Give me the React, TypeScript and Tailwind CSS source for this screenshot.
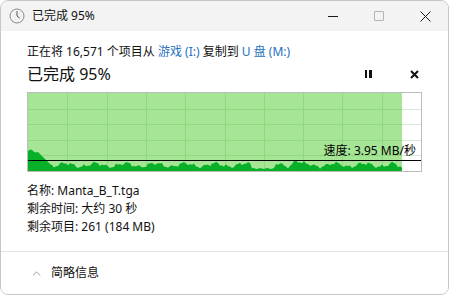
import { ChevronUp } from 'lucide-react';

const FONT = "font-['Noto_Sans','Noto_Sans_CJK_SC',sans-serif]";

// graph inner size (inside the 1px border)
const GW = 393;
const GH = 78;
const FILL_W = 374;
const SPEED_Y = 67;

function sampleHeight(x: number) {
  if (x < 9) return 20 + 1.5 * Math.sin(x * 0.6);
  if (x < 24) return 20 - (x - 9);
  let h =
    6 +
    1.8 * Math.sin(x * 0.21) +
    1.3 * Math.sin(x * 0.57 + 1.3) +
    0.8 * Math.sin(x * 1.37 + 0.4);
  if (x > 222 && x < 248) h = 2.5 + 0.6 * Math.sin(x * 0.9);
  h += 5 * Math.exp(-(((x - 268) / 4) ** 2));
  if (x > 366) h -= (x - 366) * 0.4;
  return Math.max(1.5, h);
}

const dataPath = (() => {
  let d = `M0 ${GH}`;
  for (let x = 0; x <= FILL_W; x += 2) {
    d += ` L${x} ${(GH - sampleHeight(x)).toFixed(1)}`;
  }
  d += ` L${FILL_W} ${GH} Z`;
  return d;
})();

function SpeedGraph() {
  const cols = Array.from({ length: 9 }, (_, i) => ((i + 1) * GW) / 10);
  const rows = Array.from({ length: 4 }, (_, i) => ((i + 1) * GH) / 5);
  return (
    <div className="relative h-[80px] w-full border border-[#bcbcbc] bg-white">
      <svg width={GW} height={GH} className="block">
        {rows.map((y) => (
          <line key={'w' + y} x1={FILL_W} x2={GW} y1={Math.round(y) + 0.5} y2={Math.round(y) + 0.5} stroke="#d3ebcf" />
        ))}
        <rect x={0} y={0} width={FILL_W} height={GH} fill="#a7e596" />
        {cols.map((x) => (
          <line key={'c' + x} x1={Math.round(x) + 0.5} x2={Math.round(x) + 0.5} y1={0} y2={GH} stroke="#91d780" />
        ))}
        {rows.map((y) => (
          <line key={'r' + y} x1={0} x2={FILL_W} y1={Math.round(y) + 0.5} y2={Math.round(y) + 0.5} stroke="#91d780" />
        ))}
        <path d={dataPath} fill="#07b027" />
        <line x1={0} x2={GW} y1={SPEED_Y + 0.5} y2={SPEED_Y + 0.5} stroke="#000" strokeWidth={1.2} />
      </svg>
      <span className="absolute right-[5px] top-[50px] text-[12px] leading-[16px] text-[#000]">
        速度: 3.95 MB/秒
      </span>
    </div>
  );
}

function ClockIcon() {
  return (
    <svg width="16" height="16" viewBox="0 0 16 16">
      <circle cx="8" cy="8" r="7" fill="#f2f2f2" stroke="#8a8a8a" strokeWidth="1" />
      <path d="M8 3.5 V8 L10.5 10" fill="none" stroke="#555" strokeWidth="1" strokeLinecap="round" />
    </svg>
  );
}

export default function App() {
  return (
    <div className={`h-[295px] w-[449px] bg-white ${FONT} text-[#111]`}>
      <div className="flex h-full flex-col overflow-hidden rounded-[8px] border border-[#c6c6c6]">
        {/* Title bar */}
        <div className="flex h-[30px] shrink-0 items-center bg-[#f3f3f3]">
          <div className="ml-[8px]">
            <ClockIcon />
          </div>
          <span className="ml-[7px] text-[12px] leading-[16px]">已完成 95%</span>
          <div className="ml-auto flex h-full">
            <div className="flex w-[46px] items-center justify-center">
              <div className="h-px w-[10px] bg-[#1a1a1a]" />
            </div>
            <div className="flex w-[46px] items-center justify-center">
              <div className="h-[10px] w-[10px] rounded-[1px] border border-[#b3b3b3]" />
            </div>
            <div className="flex w-[46px] items-center justify-center">
              <svg width="11" height="11" viewBox="0 0 11 11">
                <path d="M0.5 0.5 L10.5 10.5 M10.5 0.5 L0.5 10.5" stroke="#1a1a1a" strokeWidth="1" />
              </svg>
            </div>
          </div>
        </div>

        {/* Content */}
        <div className="flex h-[220px] shrink-0 flex-col bg-white px-[26px] pt-[13px]">
          <div className="text-[12px] leading-[16px]">
            正在将 16,571 个项目从 <span className="text-[#1f6fbd]">游戏 (I:)</span> 复制到{' '}
            <span className="text-[#1f6fbd]">U 盘 (M:)</span>
          </div>
          <div className="mt-[3px] flex h-[22px] items-center">
            <span className="text-[16px] leading-[22px]">已完成 95%</span>
            <div className="ml-auto flex items-center gap-[30px]">
              <div className="flex w-[16px] justify-center gap-[2px]">
                <div className="h-[8px] w-[2.5px] bg-[#111]" />
                <div className="h-[8px] w-[2.5px] bg-[#111]" />
              </div>
              <div className="flex w-[16px] justify-center">
                <svg width="9" height="9" viewBox="0 0 9 9">
                  <path d="M1 1 L8 8 M8 1 L1 8" stroke="#111" strokeWidth="2" />
                </svg>
              </div>
            </div>
          </div>
          <div className="mt-[7px]">
            <SpeedGraph />
          </div>
          <div className="mt-[10px] text-[12px] leading-[18px]">
            <div>名称: Manta_B_T.tga</div>
            <div>剩余时间: 大约 30 秒</div>
            <div>剩余项目: 261 (184 MB)</div>
          </div>
        </div>

        {/* Footer */}
        <div className="flex flex-1 items-center border-t border-[#e3e3e3] bg-white pl-[29px]">
          <ChevronUp size={13} strokeWidth={1.2} className="text-[#606060]" />
          <span className="ml-[8px] text-[12px] leading-[16px]">简略信息</span>
        </div>
      </div>
    </div>
  );
}
